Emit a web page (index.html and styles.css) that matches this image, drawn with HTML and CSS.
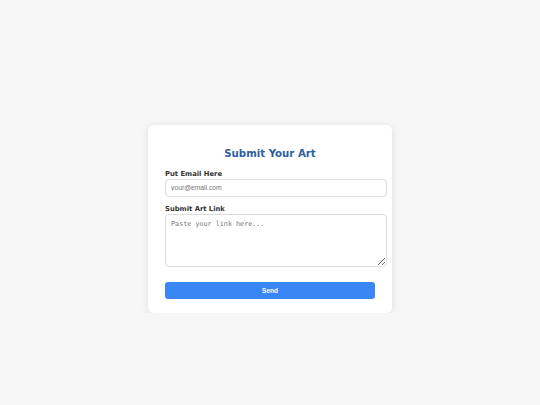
FILE: index.html
```html
<!DOCTYPE html>
<html lang="en">
<head>
<meta charset="utf-8">
<title>Submit Your Art</title>
<link rel="stylesheet" href="styles.css">
</head>
<body>
<main class="page">
  <form class="card">
    <h1 class="title">Submit Your Art</h1>
    <label class="label" for="email">Put Email Here</label>
    <input class="field" id="email" type="email" placeholder="your@email.com">
    <label class="label label-second" for="link">Submit Art Link</label>
    <textarea class="field area" id="link" placeholder="Paste your link here..."></textarea>
    <button class="send" type="button">Send</button>
  </form>
</main>
</body>
</html>
```

FILE: styles.css
```css
html, body {
  margin: 0;
  padding: 0;
  background: #f6f6f6;
}
.page {
  display: flex;
  justify-content: center;
  padding-top: 125px;
}
.card {
  width: 210px;
  background: #fff;
  border-radius: 6px;
  box-shadow: 0 1px 7px rgba(0, 0, 0, 0.1);
  padding: 23px 17px 14px;
  font-family: "DejaVu Sans", sans-serif;
}
.title {
  margin: 0 0 10px;
  text-align: center;
  font-size: 10.2px;
  line-height: 12px;
  font-weight: bold;
  color: #2b5f9e;
}
.label {
  display: block;
  font-size: 6.8px;
  line-height: 8px;
  font-weight: bold;
  color: #333;
  margin-bottom: 1px;
}
.label-second {
  margin-bottom: 1px;
}
.field {
  display: block;
  width: 100%;
  margin: 0 0 8px;
  padding: 4px 5px;
  border: 1px solid #ddd;
  border-radius: 4px;
  font-family: "Liberation Sans", Arial, sans-serif;
  font-size: 6.75px;
  line-height: 8px;
  height: 8px;
  color: #333;
  background: #fff;
  outline: none;
}
.field::placeholder {
  color: #777;
}
.area {
  height: 43px;
  padding: 5px 5px 3px;
  font-family: "DejaVu Sans Mono", monospace;
  margin-bottom: 15px;
}
.send {
  display: block;
  width: 100%;
  box-sizing: border-box;
  height: 17px;
  border: none;
  border-radius: 3px;
  background: #3b86f7;
  color: #fff;
  font-family: "Liberation Sans", Arial, sans-serif;
  font-weight: bold;
  font-size: 6.5px;
  padding: 0;
  cursor: pointer;
}
```
